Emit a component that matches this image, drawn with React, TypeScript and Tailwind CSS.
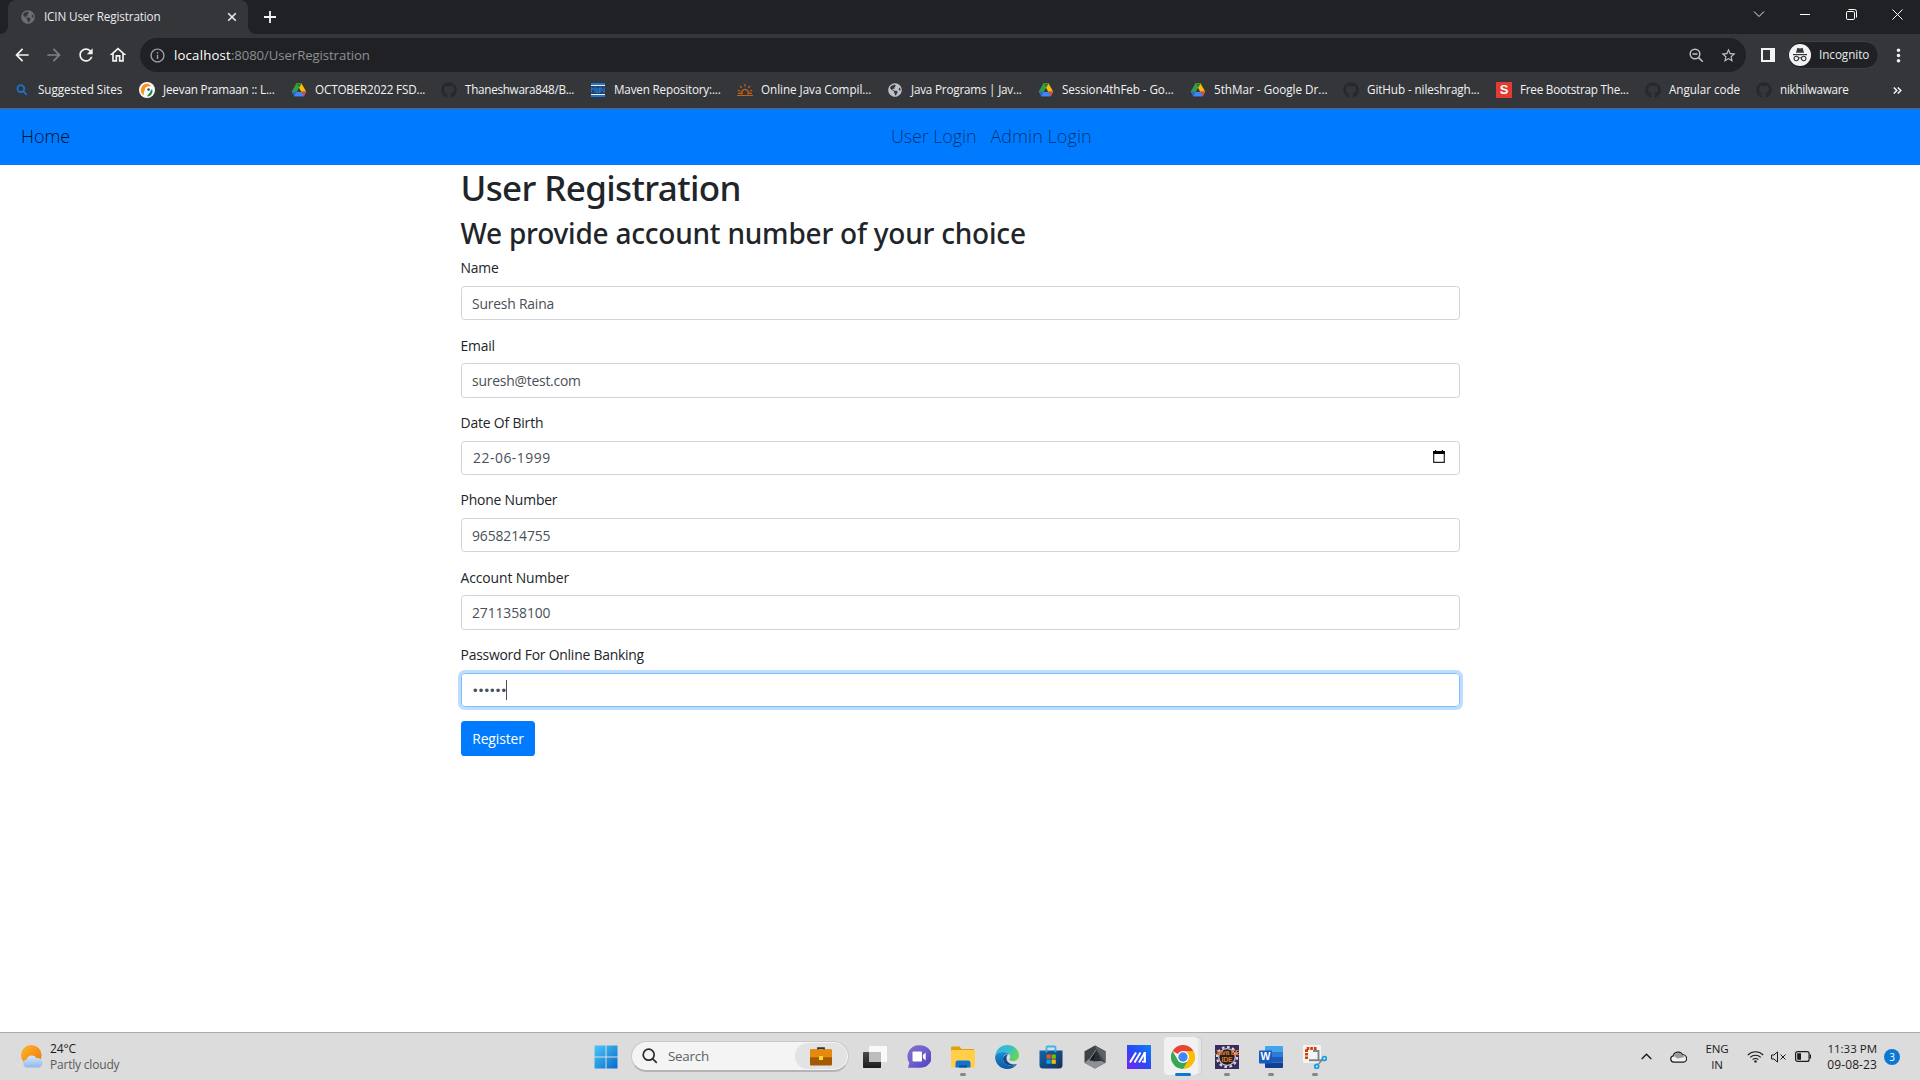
import type { ReactNode } from 'react';
import {
  MdArrowBack,
  MdArrowForward,
  MdInfoOutline,
  MdMoreVert,
  MdOutlineHome,
  MdRefresh,
  MdStarBorder,
} from 'react-icons/md';
import { FaGithub, FaGlobeAmericas } from 'react-icons/fa';

/* ---------- bookmark icons ---------- */

function DriveIcon() {
  return (
    <svg width="16" height="16" viewBox="0 0 16 16">
      <path d="M5.4 1.6h5.2L8 6.1 4.1 13.6 1 9.7z" fill="#34a853" />
      <path d="M5.4 1.6 8 6.1 3.3 13.9.8 9.8z" fill="#2f9e44" />
      <path d="M5.4 1.6h5.2l4.6 8.2H10z" fill="#fbbc04" />
      <path d="M5.4 1.6h5.2L8 6.1z" fill="#188038" />
      <path d="M3.3 14.2 5.8 9.8h9.5l-2.6 4.4z" fill="#4285f4" />
      <path d="M10.2 9.8h5.1l-2.6 4.4z" fill="#ea4335" />
      <path d="M8 6.1l2.1 3.7H5.8z" fill="#35363a" />
      <path d="M3.3 14.2 5.8 9.8.8 9.8z" fill="#2a68d8" />
      <path d="M3.300 14.200 5 11.200h6l1.700 3z" fill="#4285f4" />
    </svg>
  );
}

function PramaanIcon() {
  return (
    <svg width="16" height="16" viewBox="0 0 16 16">
      <circle cx="8" cy="8" r="8" fill="#fff" />
      <path d="M8 1.4A6.6 6.6 0 0 0 5 13.6C4 10 6 9 6 6.500 7 4.500 9.500 4 12.500 4.500A6.600 6.600 0 0 0 8 1.400z" fill="#f7931e" />
      <path d="M13 6.800c1.500 3.600-.6 7.400-4.600 7.900 0-2.500 2-2.400 2.600-4.700z" fill="#1e8e3e" />
      <circle cx="9.600" cy="7.600" r="1.300" fill="#2b4c8c" />
    </svg>
  );
}

function MavenIcon() {
  return (
    <svg width="14" height="14" viewBox="0 0 14 14">
      <path d="M0 0h14v2H0zM0 12h14v2H0z" fill="#1976d2" />
      <path d="M0 2h14v1H0zM0 11h14v1H0z" fill="#e8f1fb" />
      <path d="M0 3h14v8H0z" fill="#2b3f5c" />
      <path d="M.6 9.500v-5l1.700 2.500L4 4.500v5M5.300 4.500v5h3.200v-5M6.900 5v4M9.800 9.500v-5l3.400 5v-5" stroke="#1f78e0" strokeWidth="1" fill="none" />
    </svg>
  );
}

function SunriseIcon() {
  return (
    <svg width="16" height="14" viewBox="0 0 16 14" fill="none" stroke="#c4621c" strokeWidth="1.200">
      <path d="M0 12.500h16M1 10.300h3M12 10.300h3M5.200 11.500A3.300 3.300 0 1 1 10.800 11.500M8 1v2.500M3 3l1.700 1.900M13 3l-1.700 1.900M.8 7.300l2.400.7M15.200 7.300l-2.400.7" />
    </svg>
  );
}

function SIcon() {
  return <span className="flex size-4 items-center justify-center bg-[#e03c31] font-['Liberation_Sans'] text-[13px] font-bold leading-none text-white">S</span>;
}

function SearchBlueIcon() {
  return (
    <svg width="12" height="12" viewBox="0 0 12 12" fill="none" stroke="#1a73c8" strokeWidth="1.800">
      <circle cx="4.800" cy="4.600" r="3.400" />
      <path d="m7.300 7.200 3.500 3.600" />
    </svg>
  );
}

const gitHub = <FaGithub size={16} color="#24292e" />;

const bookmarks: { label: string; icon: ReactNode; width: string; tracking: string }[] = [
  { label: 'Suggested Sites', icon: <SearchBlueIcon />, width: 'w-[125px]', tracking: 'tracking-[-0.05px]' },
  { label: 'Jeevan Pramaan :: L...', icon: <PramaanIcon />, width: 'w-[152px]', tracking: 'tracking-[-0.18px]' },
  { label: 'OCTOBER2022 FSD...', icon: <DriveIcon />, width: 'w-[150px]', tracking: 'tracking-[-0.16px]' },
  { label: 'Thaneshwara848/B...', icon: gitHub, width: 'w-[149px]', tracking: 'tracking-[-0.28px]' },
  { label: 'Maven Repository:...', icon: <MavenIcon />, width: 'w-[147px]', tracking: 'tracking-[-0.18px]' },
  { label: 'Online Java Compil...', icon: <SunriseIcon />, width: 'w-[150px]', tracking: 'tracking-[-0.05px]' },
  { label: 'Java Programs | Jav...', icon: <FaGlobeAmericas size={14} color="#bdc1c6" />, width: 'w-[151px]', tracking: 'tracking-[-0.2px]' },
  { label: 'Session4thFeb - Go...', icon: <DriveIcon />, width: 'w-[152px]', tracking: 'tracking-[-0.09px]' },
  { label: '5thMar - Google Dr...', icon: <DriveIcon />, width: 'w-[153px]', tracking: 'tracking-[0px]' },
  { label: 'GitHub - nileshragh...', icon: gitHub, width: 'w-[153px]', tracking: 'tracking-[-0.1px]' },
  { label: 'Free Bootstrap The...', icon: <SIcon />, width: 'w-[149px]', tracking: 'tracking-[-0.23px]' },
  { label: 'Angular code', icon: gitHub, width: 'w-[111px]', tracking: 'tracking-[-0.05px]' },
  { label: 'nikhilwaware', icon: gitHub, width: 'w-[137px]', tracking: 'tracking-[-0.27px]' },
];

/* ---------- browser chrome ---------- */

function TabStrip() {
  return (
    <div className="flex h-[34px] bg-[#202124]">
      <div className="flex w-2 items-end bg-[#35363a]">
        <div className="h-full w-full rounded-br-lg bg-[#202124]" />
      </div>
      <div className="flex h-full w-60 items-center rounded-t-lg bg-[#35363a] pl-[13px] pr-[11px] text-[#e8eaed]">
        <FaGlobeAmericas size={14} color="#6b6e72" />
        <span className="ml-[9px] text-[11.7px] tracking-[-0.14px]">ICIN User Registration</span>
        <svg className="ml-auto" width="10" height="10" viewBox="0 0 10 10" stroke="#e8eaed" strokeWidth="1.600">
          <path d="m1.200 1.200 7.600 7.600M8.800 1.200 1.200 8.800" />
        </svg>
      </div>
      <div className="flex w-2 bg-[#35363a]">
        <div className="h-full w-full rounded-bl-lg bg-[#202124]" />
      </div>
      <svg className="ml-2 mt-[11px]" width="12" height="12" viewBox="0 0 12 12" stroke="#f1f3f4" strokeWidth="1.800">
        <path d="M6 0v12M0 6h12" />
      </svg>
      <div className="ml-auto flex h-7 text-white">
        <div className="flex w-[46px] items-center justify-center">
          <svg width="12" height="8" viewBox="0 0 12 8" fill="none" stroke="#e8eaed"><path d="m1 1.500 5 5 5-5" /></svg>
        </div>
        <div className="flex w-[46px] items-center justify-center"><div className="h-px w-2.5 bg-white" /></div>
        <div className="flex w-[46px] items-center justify-center">
          <svg width="11" height="11" viewBox="0 0 11 11" fill="none" stroke="#fff">
            <rect x=".5" y="2.500" width="8" height="8" rx="1.300" />
            <path d="M2.500.5h6a2 2 0 0 1 2 2v6" />
          </svg>
        </div>
        <div className="flex w-[46px] items-center justify-center">
          <svg width="11" height="11" viewBox="0 0 11 11" stroke="#fff"><path d="m.5.5 10 10M10.500.5l-10 10" /></svg>
        </div>
      </div>
    </div>
  );
}

function IncognitoBadge() {
  return (
    <svg width="22" height="22" viewBox="0 0 22 22">
      <circle cx="11" cy="11" r="11" fill="#f1f3f4" />
      <path d="M8.200 4.200c1.300-.3 1.700.3 2.800.3s1.500-.6 2.800-.3l1.200 4.600H7z" fill="#35363a" />
      <path d="M4 10.600h14" stroke="#35363a" strokeWidth="1.200" />
      <g fill="none" stroke="#35363a" strokeWidth="1.100">
        <circle cx="7.300" cy="14.500" r="2.200" />
        <circle cx="14.700" cy="14.500" r="2.200" />
        <path d="M9.500 14.200c1-.6 2-.6 3 0" />
      </g>
    </svg>
  );
}

function Toolbar() {
  return (
    <div className="flex h-[42px] items-center bg-[#35363a] pl-3">
      <MdArrowBack size={20} color="#f1f3f4" />
      <MdArrowForward className="ml-3" size={20} color="#7f8185" />
      <MdRefresh className="ml-3" size={20} color="#f1f3f4" />
      <MdOutlineHome className="ml-3" size={20} color="#f1f3f4" />
      <div className="ml-3 flex h-[34px] w-[1606px] items-center rounded-full bg-[#202124] pl-[9px] pr-[9.500px]">
        <MdInfoOutline size={17} color="#9aa0a6" />
        <span className="ml-2 pt-0.5 text-[13.2px] tracking-[0.18px] text-white">localhost</span>
        <span className="pt-0.5 text-[13.2px] tracking-[-0.09px] text-[#8b8f94]">:8080/UserRegistration</span>
        <svg className="ml-auto" width="15" height="15" viewBox="0 0 15 15" fill="none" stroke="#bdc1c6" strokeWidth="1.500">
          <circle cx="6" cy="6" r="4.800" />
          <path d="m9.400 9.400 4.400 4.400M3.500 6h5" />
        </svg>
        <MdStarBorder className="ml-[16px]" size={17} color="#bdc1c6" />
      </div>
      <div className="ml-[15px] h-3.5 w-3.5 border-2 border-r-[5px] border-[#f1f3f4]" />
      <div className="ml-3 flex h-7 w-[92px] items-center rounded-full border border-[#3f4145] bg-[#202124] pl-px">
        <IncognitoBadge />
        <span className="ml-2 text-[11.7px] tracking-[-0.05px] text-[#e8eaed]">Incognito</span>
      </div>
      <MdMoreVert className="ml-[9px]" size={21} color="#f1f3f4" />
    </div>
  );
}

function BookmarksBar() {
  return (
    <div className="flex h-[33px] items-center border-b border-[#5f6164] bg-[#35363a] pb-[4px] pl-3.5 text-[11.7px] text-[#f1f3f4]">
      {bookmarks.map((b) => (
        <div key={b.label} className={`flex shrink-0 items-center whitespace-nowrap ${b.width}`}>
          <span className="mr-2 flex size-4 items-center justify-center">{b.icon}</span>
          <span className={b.tracking}>{b.label}</span>
        </div>
      ))}
      <svg width="9" height="7" viewBox="0 0 9 7" fill="none" stroke="#f1f3f4" strokeWidth="1.500">
        <path d="m.8.5 3 3-3 3M4.800.5l3 3-3 3" />
      </svg>
    </div>
  );
}

/* ---------- page ---------- */

function CalendarIcon() {
  return (
    <svg className="mb-0.5" width="12" height="13" viewBox="0 0 12 13">
      <path d="M.7 1.500h10.600V12.300H.7z" fill="none" stroke="#222" strokeWidth="1.200" />
      <path d="M.2 1h11.600v3H.2zM2 0h1.200v2H2zM8.800 0H10v2H8.800z" fill="#000" />
    </svg>
  );
}

const fields: { label: string; labelTracking: string; value: string; valueStyle: string; date?: boolean }[] = [
  { label: 'Name', labelTracking: 'tracking-[-0.2px]', value: 'Suresh Raina', valueStyle: 'tracking-[-0.2px]' },
  { label: 'Email', labelTracking: 'tracking-[-0.2px]', value: 'suresh@test.com', valueStyle: 'tracking-[-0.22px]' },
  { label: 'Date Of Birth', labelTracking: 'tracking-[-0.16px]', value: '22-06-1999', valueStyle: 'pl-px tracking-[0.52px]', date: true },
  { label: 'Phone Number', labelTracking: 'tracking-[-0.18px]', value: '9658214755', valueStyle: 'tracking-[-0.1px]' },
  { label: 'Account Number', labelTracking: 'tracking-[-0.1px]', value: '2711358100', valueStyle: 'tracking-[-0.1px]' },
];

function Page() {
  return (
    <main className="h-[923px] bg-white">
      <nav className="flex h-14 items-center bg-[#007bff] pb-0.5 text-[18px] font-light">
        <span className="w-[891px] pl-[21px] tracking-[-0.03px] text-black/90">Home</span>
        <span className="w-[99.500px] tracking-[-0.13px] text-black/60">User Login</span>
        <span className="tracking-[0.05px] text-black/60">Admin Login</span>
      </nav>
      <div className="mx-auto w-[999px] text-[#212529]">
        <h1 className="mb-[7.2px] h-[43.2px] pt-px font-['Noto_Sans'] text-[35px] font-medium leading-[43.2px] tracking-[-0.62px]">User Registration</h1>
        <h2 className="mb-[7.2px] h-[34.6px] pt-px font-['Noto_Sans'] text-[28px] font-medium leading-[34.6px] tracking-[-0.22px]">We provide account number of your choice</h2>
        {fields.map((f) => (
          <div key={f.label} className="mb-[14.4px]">
            <label className={`mb-[7px] block h-[21.6px] text-[13.9px] leading-[21.6px] ${f.labelTracking}`}>{f.label}</label>
            <div className="flex h-[34.4px] items-center justify-between rounded-[3.6px] border border-[#ced4da] pl-[10.5px] pr-[14px] text-[13.9px] text-[#495057]">
              <span className={`pt-0.5 ${f.valueStyle}`}>{f.value}</span>
              {f.date && <CalendarIcon />}
            </div>
          </div>
        ))}
        <label className="mb-[7.2px] block h-[21.6px] text-[13.9px] leading-[21.6px] tracking-[-0.22px]">Password For Online Banking</label>
        <div className="mb-[14.4px] flex h-[34.2px] items-center rounded-[3.6px] border border-[#80bdff] pl-[11.500px] text-[#495057] shadow-[0_0_0_3px_rgba(0,123,255,0.25)]">
          <span className="pt-0.5 font-['Liberation_Sans'] text-[13px] leading-none tracking-[1.15px]">••••••</span>
          <span className="-ml-px h-5 w-px bg-[#495057]" />
        </div>
        <button className="flex h-[34.6px] w-[74px] items-center justify-center rounded-[3.6px] bg-[#007bff] pl-px pt-0.5 text-[13.9px] tracking-[-0.1px] text-white">Register</button>
      </div>
    </main>
  );
}

/* ---------- taskbar ---------- */

function WeatherIcon() {
  return (
    <svg width="23" height="23" viewBox="0 0 23 23">
      <defs>
        <linearGradient id="sun" x1="0" y1="0" x2="1" y2="1"><stop stopColor="#fcb92c" /><stop offset="1" stopColor="#f2720c" /></linearGradient>
        <linearGradient id="cloud" x1="0" y1="0" x2="0" y2="1"><stop stopColor="#d7e8fc" /><stop offset="1" stopColor="#8fb8ee" /></linearGradient>
      </defs>
      <circle cx="10.300" cy="10.300" r="10.300" fill="url(#sun)" />
      <path d="M6 22.500a4 4 0 0 1-.4-7.900 5.400 5.400 0 0 1 10-1.400 4.800 4.800 0 0 1 2.400 9.300z" fill="url(#cloud)" />
    </svg>
  );
}

function StartIcon() {
  return (
    <svg width="24" height="24" viewBox="0 0 24 24">
      <defs><linearGradient id="win" gradientUnits="userSpaceOnUse" x1="0" y1="0" x2="24" y2="24"><stop stopColor="#4cc9fb" /><stop offset="1" stopColor="#0669c9" /></linearGradient></defs>
      <path d="M.5.5H11.500V11.500H.5zM12.500.5h11v11h-11zM.5 12.500h11v11H.5zM12.500 12.500h11v11h-11z" fill="url(#win)" />
    </svg>
  );
}

function BriefcaseIcon() {
  return (
    <svg width="22" height="19" viewBox="0 0 22 19">
      <path d="M8 3V1.200h6V3" fill="none" stroke="#333" strokeWidth="1.800" />
      <rect y="2.500" width="22" height="16" rx="1" fill="#a35a05" />
      <path d="M0 3.500a1 1 0 0 1 1-1h20a1 1 0 0 1 1 1v6.800H0z" fill="#e58a0b" />
      <rect x="9" y="9" width="4" height="4" fill="#ffd92e" />
    </svg>
  );
}

function TaskViewIcon() {
  return (
    <svg width="24" height="22" viewBox="0 0 24 22">
      <defs><linearGradient id="tv" x1="0" y1="0" x2="0" y2="1"><stop stopColor="#4a4a4a" /><stop offset="1" stopColor="#1c1c1c" /></linearGradient></defs>
      <rect y="6" width="18" height="16" rx=".8" fill="url(#tv)" />
      <rect x="6" width="18" height="16" rx=".8" fill="#fff" fillOpacity=".82" />
      <path d="M6 6h12v10H6z" fill="#bdbdbd" />
    </svg>
  );
}

function ChatIcon() {
  return (
    <svg width="24" height="23" viewBox="0 0 24 23">
      <defs><linearGradient id="chat" x1="0" y1="0" x2="1" y2="1"><stop stopColor="#8a6fc4" /><stop offset=".5" stopColor="#6c5fd0" /><stop offset="1" stopColor="#4a3fc0" /></linearGradient></defs>
      <path d="M12 .3a11.300 11.300 0 1 1 0 22.400H1l1.300-5A11.300 11.300 0 0 1 12 .3z" fill="url(#chat)" />
      <rect x="5.500" y="6.500" width="9.500" height="10" rx="1" fill="#fff" />
      <path d="M16 10l2.700-2.500v8L16 13z" fill="#fff" />
    </svg>
  );
}

function FolderIcon() {
  return (
    <svg width="24" height="22" viewBox="0 0 24 22">
      <path d="M0 1.500A1 1 0 0 1 1 .5h7.500l2 2.500H23v6H0z" fill="#e0a010" />
      <rect y="4" width="24" height="17.500" rx="1" fill="#ffcf4a" />
      <path d="M4.500 21.500V17a2.500 2.500 0 0 1 2.500-2.500h10a2.500 2.500 0 0 1 2.500 2.500v4.500z" fill="#0f74d1" />
      <path d="M8 21.500v-2.200h8v2.200z" fill="#0a4f9c" />
    </svg>
  );
}

function EdgeIcon() {
  return (
    <svg width="24" height="24" viewBox="0 0 24 24">
      <defs>
        <linearGradient id="eg" x1="0" y1="0" x2="1" y2=".4"><stop stopColor="#2db4e8" /><stop offset=".6" stopColor="#35c1c9" /><stop offset="1" stopColor="#62d65a" /></linearGradient>
        <linearGradient id="eb" x1="0" y1="0" x2="0" y2="1"><stop stopColor="#1b8fd8" /><stop offset="1" stopColor="#0c59a4" /></linearGradient>
      </defs>
      <path d="M.2 11C1 4.500 6 0 12.200 0 19 0 24 5 24 10.500c0 3.500-2.800 5.500-6 5.500-2.300 0-3.700-.8-3.700-1.600 0-.6 1-1 1-2.900 0-2.300-2.300-4.500-5.800-4.500C5 7 1.500 9 .2 11z" fill="url(#eg)" />
      <path d="M.2 11C1.500 8.400 5 7 8.500 7c3 0 5.200 1.200 6.200 2.600-4-1-6.700 1-6.700 4.400 0 5 5.500 7.500 10.500 6.500 1.500-.3 2.700-1 3.600-1.600C20 22 16.500 24 12 24 5 24-.5 18 .2 11z" fill="url(#eb)" />
      <path d="M8 14c0 5 5.500 7.500 10.500 6.500 1.500-.3 2.700-1 3.600-1.600C17 20.500 11 18 11.500 12.500c.1-1 .7-2.200 1.500-3C9.800 9.700 8 11.500 8 14z" fill="#124b8f" />
    </svg>
  );
}

function StoreIcon() {
  return (
    <svg width="24" height="24" viewBox="0 0 24 24">
      <defs><linearGradient id="st" x1="0" y1="0" x2="1" y2="1"><stop stopColor="#1066ae" /><stop offset="1" stopColor="#17305a" /></linearGradient></defs>
      <path d="M7.500 7V2.500a1 1 0 0 1 1-1h7a1 1 0 0 1 1 1V7" fill="none" stroke="#35b8ee" strokeWidth="1.800" />
      <path d="M.5 5.500h23V20a3.500 3.500 0 0 1-3.500 3.500H4A3.500 3.500 0 0 1 .5 20z" fill="url(#st)" />
      <path d="M7.500 9.500h4.200v4.200H7.500z" fill="#f25022" />
      <path d="M12.600 9.500h4.200v4.200h-4.200z" fill="#7fba00" />
      <path d="M7.500 14.600h4.200v4.200H7.500z" fill="#00a4ef" />
      <path d="M12.600 14.600h4.200v4.200h-4.200z" fill="#ffb900" />
      <path d="M7.500 5.500v1.700M16.500 5.500v1.700" stroke="#35b8ee" strokeWidth="1.800" />
    </svg>
  );
}

function ArmouryIcon() {
  return (
    <svg width="22" height="24" viewBox="0 0 22 24">
      <path d="M11 .5 21.500 6.300v11.400L11 23.500.5 17.700V6.300z" fill="#3e4247" />
      <path d="M11 .5 21.500 6.300v11.400L12 4z" fill="#5b6066" />
      <path d="M.5 17.700 5 14l12 2 4.500 1.700L11 23.500z" fill="#8d9196" />
      <path d="M12 5 16.500 16 5 15.500z" fill="#14171a" />
      <path d="M12 5 9 16.500l7.500-.5z" fill="#2a2e33" />
      <path d="M12 5 5 15.500" stroke="#a5a9ae" strokeWidth=".8" />
    </svg>
  );
}

function MyAsusIcon() {
  return (
    <svg width="24" height="24" viewBox="0 0 24 24">
      <defs><linearGradient id="as" x1="0" y1="1" x2="1" y2="0"><stop stopColor="#7a22f5" /><stop offset=".5" stopColor="#2a49f5" /><stop offset="1" stopColor="#0a84f8" /></linearGradient></defs>
      <path d="M0 0h24v24H0z" fill="url(#as)" />
      <path d="M3 17.500 9 7.500M7.500 17.500 13.500 7.500M12 17.500 18 7.500" fill="none" stroke="#fff" strokeWidth="2" />
      <path d="M17.800 7v10.500" stroke="#fff" strokeWidth="2.200" />
      <path d="M15 16.600h4" stroke="#fff" strokeWidth="1.600" />
    </svg>
  );
}

function ChromeIcon() {
  return (
    <svg width="24" height="24" viewBox="0 0 24 24">
      <path d="M12 12 1.600 6A12 12 0 0 1 22.400 6z" fill="#ea4335" />
      <path d="M12 12V6h10.400A12 12 0 0 1 12 24z" fill="#fbbc04" />
      <path d="M1.600 6 6.800 15 12 18l5.200-3L12 24A12 12 0 0 1 1.600 6z" fill="#34a853" />
      <circle cx="12" cy="12" r="6" fill="#fff" />
      <circle cx="12" cy="12" r="4.700" fill="#4285f4" />
    </svg>
  );
}

function JavaEeIcon() {
  return (
    <span className="relative flex size-6 items-center justify-center overflow-hidden bg-[#3b2a5e]">
      <svg className="absolute inset-0" width="24" height="24" viewBox="0 0 24 24">
        <circle cx="12" cy="12" r="10" fill="none" stroke="#d9d6e0" strokeWidth="2.200" strokeDasharray="2.700 2.500" />
        <circle cx="12" cy="12" r="8.300" fill="#241c28" stroke="#c9c6d0" strokeWidth="1.300" />
      </svg>
      <span className="relative text-center font-['Liberation_Sans'] text-[7px] font-bold leading-[6.500px] tracking-[-0.3px] text-[#e07b1e]">
        <span className="block whitespace-nowrap">Java EE</span>
        <span className="block">IDE</span>
      </span>
    </span>
  );
}

function WordIcon() {
  return (
    <span className="relative block h-[22px] w-6">
      <svg className="absolute inset-0" width="24" height="22" viewBox="0 0 24 22">
        <path d="M6 1a1 1 0 0 1 1-1h16a1 1 0 0 1 1 1v4.500H6z" fill="#41a5ee" />
        <path d="M6 5.500h18V11H6z" fill="#2b7cd3" />
        <path d="M6 11h18v5.500H6z" fill="#185abd" />
        <path d="M6 16.500h18V21a1 1 0 0 1-1 1H7a1 1 0 0 1-1-1z" fill="#103f91" />
        <rect y="4.500" width="13" height="13" rx="1" fill="#185abd" />
      </svg>
      <span className="absolute left-0 top-[4.500px] w-[13px] text-center font-['Liberation_Sans'] text-[10.500px] font-bold leading-[13px] text-white">W</span>
    </span>
  );
}

function SnipIcon() {
  return (
    <svg width="24" height="24" viewBox="0 0 24 24">
      <rect width="18" height="18" rx="1.500" fill="#f4f4f4" />
      <path d="M13.500 3.500H3.500V14" fill="none" stroke="#d83b01" strokeWidth="3" strokeDasharray="2.600 1" />
      <path d="M10 6h5.500v10M6 15.200h13" fill="none" stroke="#7b868e" strokeWidth="1.900" />
      <g fill="#eef8fe" stroke="#1e9fe0" strokeWidth="1.900">
        <circle cx="21.400" cy="13.500" r="1.900" />
        <circle cx="13.700" cy="21.400" r="1.900" />
      </g>
      <path d="m19.500 14.500-4.500 5" stroke="#7b868e" strokeWidth="1.400" />
    </svg>
  );
}

const apps: { id: string; icon: ReactNode; running?: boolean; active?: boolean }[] = [
  { id: 'taskview', icon: <TaskViewIcon /> },
  { id: 'chat', icon: <ChatIcon /> },
  { id: 'explorer', icon: <FolderIcon />, running: true },
  { id: 'edge', icon: <EdgeIcon /> },
  { id: 'store', icon: <StoreIcon /> },
  { id: 'armoury', icon: <ArmouryIcon /> },
  { id: 'myasus', icon: <MyAsusIcon /> },
  { id: 'chrome', icon: <ChromeIcon />, active: true },
  { id: 'eclipse', icon: <JavaEeIcon />, running: true },
  { id: 'word', icon: <WordIcon />, running: true },
  { id: 'snip', icon: <SnipIcon />, running: true },
];

function AppButton({ icon, running, active }: { icon: ReactNode; running?: boolean; active?: boolean }) {
  return (
    <div className="relative flex h-full w-11 items-center justify-center">
      {active && (
        <>
          <span className="absolute left-[5px] top-1 h-[38px] w-[36px] rounded-[4px] border border-[#cfcfcf] bg-[#e6e6e6]" />
          <span className="absolute left-[3px] top-1 h-[38px] w-[34px] rounded-[4px] bg-[#f1f1f1]" />
        </>
      )}
      <span className="relative">{icon}</span>
      {running && <span className="absolute bottom-[4px] left-[19px] h-[3px] w-1.5 rounded-full bg-[#858585]" />}
      {active && <span className="absolute bottom-[4px] left-[14px] h-[3px] w-4 rounded-full bg-[#0b78d4]" />}
    </div>
  );
}

function Taskbar() {
  return (
    <footer className="flex h-[49px] border-t border-[#acacac] bg-[#dcdcdc] pb-px text-[12px] leading-4 text-[#1b1b1b]">
      <div className="flex w-[584px] items-center pl-[21px]">
        <WeatherIcon />
        <div className="ml-1.5">
          <div className="tracking-[-0.1px]">24°C</div>
          <div className="tracking-[-0.2px] text-[#5a5a5a]">Partly cloudy</div>
        </div>
      </div>
      <div className="flex w-11 items-center justify-center"><StartIcon /></div>
      <div className="ml-[3px] mr-1 mt-2 flex h-[31px] w-[218px] items-center rounded-full border border-b-2 border-[#c9c9c9] border-b-[#b4b4b4] bg-[#f4f4f4] pl-2.5 pr-px">
        <svg width="16" height="16" viewBox="0 0 16 16" fill="none" stroke="#2a2a2a" strokeWidth="1.700">
          <circle cx="6.700" cy="6.700" r="5.500" />
          <path d="m10.800 10.800 4 4" />
        </svg>
        <span className="ml-2.5 text-[13.4px] tracking-[-0.25px] text-[#606060]">Search</span>
        <span className="ml-auto flex h-[26px] w-[52px] items-center justify-center rounded-full bg-[#e3e3e3]"><BriefcaseIcon /></span>
      </div>
      {apps.map((a) => (
        <AppButton key={a.id} icon={a.icon} running={a.running} active={a.active} />
      ))}
      <div className="ml-auto flex items-center pr-[20px]">
        <svg width="11" height="7" viewBox="0 0 11 7" fill="none" stroke="#1b1b1b" strokeWidth="1.400"><path d="m.7 6 4.800-4.800L10.300 6" /></svg>
        <svg className="ml-[18px]" width="17" height="12" viewBox="0 0 17 12">
          <path d="M4 11.200a3.200 3.200 0 0 1-.8-6.300A5 5 0 0 1 12.500 3.800a3.700 3.700 0 0 1 .8 7.400z" fill="#f0f0f0" stroke="#1b1b1b" strokeWidth="1.200" />
          <path d="M3.600 5A4.800 4.800 0 0 1 12.300 4.200L15 6 7.500 7.500z" fill="#9a9a9a" />
        </svg>
        <div className="ml-[18px] w-[24px] text-center text-[11.500px] tracking-[-0.13px]">
          <div>ENG</div>
          <div>IN</div>
        </div>
        <svg className="ml-[18px]" width="17" height="13" viewBox="0 0 17 13" fill="none" stroke="#1b1b1b" strokeWidth="1.100">
          <path d="M.8 5a10.900 10.900 0 0 1 15.400 0M3.200 7.400a7.500 7.500 0 0 1 10.600 0M5.600 9.700a4.100 4.100 0 0 1 5.800 0" />
          <circle cx="8.500" cy="11.400" r="1.200" fill="#1b1b1b" stroke="none" />
        </svg>
        <svg className="ml-[7px]" width="16" height="12" viewBox="0 0 16 12" fill="none" stroke="#1b1b1b">
          <path d="M.6 4h2.300L6.500.9v10.200L2.900 8H.6zM9.500 3.500l5 5M14.500 3.500l-5 5" />
        </svg>
        <svg className="ml-[8px]" width="17" height="11" viewBox="0 0 17 11">
          <rect x=".6" y=".6" width="13.500" height="9.800" rx="2" fill="none" stroke="#1b1b1b" strokeWidth="1.200" />
          <path d="M2.200 2.200H6v6.600H2.200zM14.800 3.500h1.200v4h-1.200z" fill="#1b1b1b" />
        </svg>
        <div className="ml-[14px] w-[51px] text-right">
          <div className="text-[11.500px]">11:33 PM</div>
          <div className="tracking-[0.1px]">09-08-23</div>
        </div>
        <span className="ml-[7px] flex size-4 items-center justify-center rounded-full bg-[#0b78d4] text-[10px] leading-none text-white">3</span>
      </div>
    </footer>
  );
}

export default function App() {
  return (
    <div className="h-[1080px] w-[1920px] overflow-hidden bg-white font-['Open_Sans',sans-serif]">
      <TabStrip />
      <Toolbar />
      <BookmarksBar />
      <Page />
      <Taskbar />
    </div>
  );
}
